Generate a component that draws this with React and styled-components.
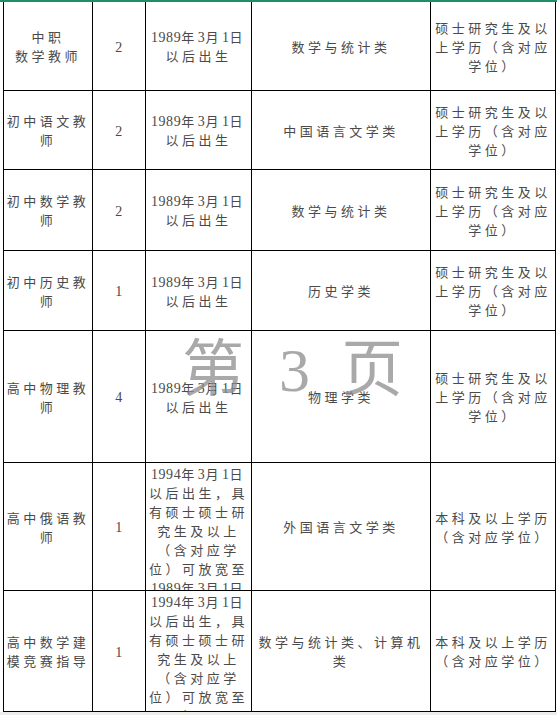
import React from "react";
import styled, { createGlobalStyle } from "styled-components";

const GlobalStyle = createGlobalStyle`
  html, body {
    margin: 0;
    padding: 0;
    background: #fff;
    overflow: hidden;
  }
  body {
    font-family: "Liberation Serif", "Noto Sans CJK SC", serif;
  }
`;

const date89 = "1989年3月1日以后出生";
const date94 =
  "1994年3月1日以后出生，具有硕士硕士研究生及以上（含对应学位）可放宽至1989年3月1日以后出生";
const master = "硕士研究生及以上学历（含对应学位）";
const bachelor = "本科及以上学历（含对应学位）";

const rows = [
  { name: ["中职", "数学教师"], count: "2", date: date89, major: "数学与统计类", edu: master, h: 89 },
  { name: ["初中语文教师"], count: "2", date: date89, major: "中国语言文学类", edu: master, h: 79 },
  { name: ["初中数学教师"], count: "2", date: date89, major: "数学与统计类", edu: master, h: 81 },
  { name: ["初中历史教师"], count: "1", date: date89, major: "历史学类", edu: master, h: 80 },
  { name: ["高中物理教师"], count: "4", date: date89, major: "物理学类", edu: master, h: 132 },
  { name: ["高中俄语教师"], count: "1", date: date94, major: "外国语言文学类", edu: bachelor, h: 128 },
  { name: ["高中数学建模竞赛指导"], count: "1", date: date94, major: "数学与统计类、计算机类", edu: bachelor, h: 121 },
];

export default function App() {
  return (
    <Page>
      <GlobalStyle />
      <TopBar />
      <Sheet>
        {rows.map((row, i) => (
          <Row key={i} $h={row.h}>
            <Cell>
              <Text>
                {row.name.map((part, j) => (
                  <React.Fragment key={j}>
                    {j > 0 && <br />}
                    {part}
                  </React.Fragment>
                ))}
              </Text>
            </Cell>
            <Cell>
              <Text>
                <Num>{row.count}</Num>
              </Text>
            </Cell>
            <Cell>
              <Text>{withNums(row.date)}</Text>
            </Cell>
            <Cell>
              <Text>{row.major}</Text>
            </Cell>
            <Cell>
              <Text>{row.edu}</Text>
            </Cell>
          </Row>
        ))}
        <Watermark>
          第<Gap $w={35} />3<Gap $w={31} />页
        </Watermark>
      </Sheet>
      <BottomStrip />
    </Page>
  );
}

function withNums(text) {
  return text
    .split(/(\d+)/)
    .map((part, i) => (/^\d+$/.test(part) ? <Num key={i}>{part}</Num> : part));
}

const Page = styled.div`
  width: 557px;
  height: 715px;
  overflow: hidden;
  display: flex;
  flex-direction: column;
`;

const TopBar = styled.div`
  height: 2px;
  flex: none;
  background: #1f8d66;
`;

const Sheet = styled.div`
  position: relative;
  margin-left: 3px;
  width: 553px;
  border-left: 1px solid #000;
  flex: none;
`;

const Row = styled.div`
  display: grid;
  grid-template-columns: 89px 53px 106px 179px 125px;
  height: ${(p) => p.$h}px;
`;

const Cell = styled.div`
  box-sizing: border-box;
  border-right: 1px solid #000;
  border-bottom: 1px solid #000;
  overflow: hidden;
  display: flex;
  flex-direction: column;
  justify-content: safe center;
  align-items: center;
`;

const Text = styled.div`
  width: 100%;
  text-align: center;
  font-size: 13px;
  line-height: 19px;
  letter-spacing: 3.5px;
  color: #4a4a4a;
  line-break: strict;
  padding-top: 2px;
`;

const Num = styled.span`
  font-family: "Liberation Serif", serif;
  font-size: 14px;
  letter-spacing: 0.6px;
`;

const Watermark = styled.div`
  position: absolute;
  left: 178px;
  top: 337px;
  display: flex;
  align-items: baseline;
  font-family: "Liberation Serif", "Noto Sans CJK SC", serif;
  font-size: 62px;
  line-height: 1;
  color: rgba(140, 140, 140, 0.75);
  pointer-events: none;
`;

const Gap = styled.span`
  display: inline-block;
  width: ${(p) => p.$w}px;
`;

const BottomStrip = styled.div`
  height: 3px;
  background: #eceeec;
  flex: none;
`;
